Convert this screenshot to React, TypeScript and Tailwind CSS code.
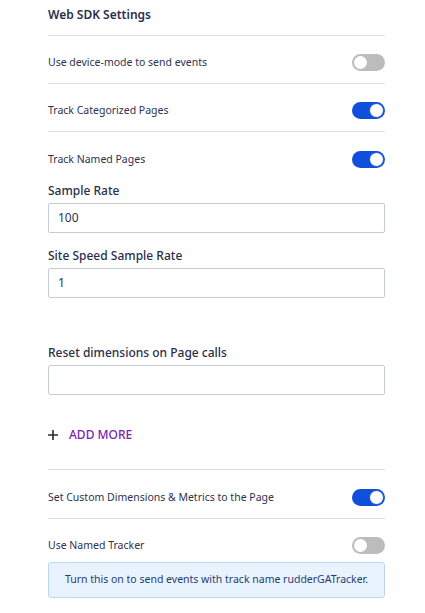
import React from "react";

const Toggle = ({ on }: { on: boolean }) => (
    <div
        className={
            on
                ? "w-[33px] h-[17px] rounded-full bg-[#0f4fdc] flex items-center justify-end pr-[1px]"
                : "w-[33px] h-[17px] rounded-full bg-[#bcbcbc] flex items-center justify-start pl-[2px]"
        }
    >
        <div
            className={
                on
                    ? "w-[15px] h-[15px] rounded-full bg-white border border-[#0f4fdc]"
                    : "w-[13px] h-[13px] rounded-full bg-white"
            }
        />
    </div>
);

const SwitchRow = ({ label, on, border = true }: { label: string; on: boolean; border?: boolean }) => (
    <div className={border ? "pt-[18px] pb-[13px] border-b border-[#dddde0]" : "pt-[19px]"}>
        <div className="flex items-center justify-between h-4">
            <span className="text-[10.5px] leading-4 text-[#2e3250]">{label}</span>
            <Toggle on={on} />
        </div>
    </div>
);

const Field = ({ label, value, className }: { label: string; value: string; className: string }) => (
    <div className={className}>
        <div className="text-[12px] leading-[18px] font-medium text-[#2a2e4a]">{label}</div>
        <div className="mt-[3px] h-[30px] border border-[#c6ccd6] rounded-[2px] flex items-center px-[9px] text-[12px] text-[#2e3250]">
            {value}
        </div>
    </div>
);

export default function App() {
    return (
        <div className="w-full bg-white pl-[48px] pr-[40px] font-['Noto_Sans',sans-serif]">
            <div className="h-[36px] pt-[7px] border-b border-[#dddde0]">
                <div className="text-[12px] leading-4 font-semibold text-[#2a2e4a]">Web SDK Settings</div>
            </div>

            <SwitchRow label="Use device-mode to send events" on={false} />
            <SwitchRow label="Track Categorized Pages" on={true} />
            <SwitchRow label="Track Named Pages" on={true} border={false} />

            <Field label="Sample Rate" value="100" className="mt-[15px]" />
            <Field label="Site Speed Sample Rate" value="1" className="mt-[14px]" />
            <Field label="Reset dimensions on Page calls" value="" className="mt-[46px]" />

            <div className="mt-[32px] flex items-center h-4 gap-[11px]">
                <svg width="10" height="10" viewBox="0 0 10 10" className="text-[#2a2a2a]">
                    <path d="M5 0v10M0 5h10" stroke="currentColor" strokeWidth="1.6" />
                </svg>
                <span className="text-[12px] leading-4 text-[#7a1fb0] font-medium">ADD MORE</span>
            </div>

            <div className="mt-[26px] border-t border-[#dddde0]" />
            <div className="pt-[19px] pb-[13px] border-b border-[#dddde0]">
                <div className="flex items-center justify-between h-4">
                    <span className="text-[10.5px] leading-4 text-[#2e3250]">Set Custom Dimensions &amp; Metrics to the Page</span>
                    <Toggle on={true} />
                </div>
            </div>
            <div className="pt-[18px]">
                <div className="flex items-center justify-between h-4">
                    <span className="text-[10.5px] leading-4 text-[#2e3250]">Use Named Tracker</span>
                    <Toggle on={false} />
                </div>
            </div>
            <div className="mt-[9px] h-[36px] bg-[#e8f3fe] border border-[#b9d7f8] rounded-[3px] flex items-center justify-center">
                <span className="whitespace-nowrap text-[10.5px] text-[#1f3d73]">
                    Turn this on to send events with track name rudderGATracker.
                </span>
            </div>
        </div>
    );
}
